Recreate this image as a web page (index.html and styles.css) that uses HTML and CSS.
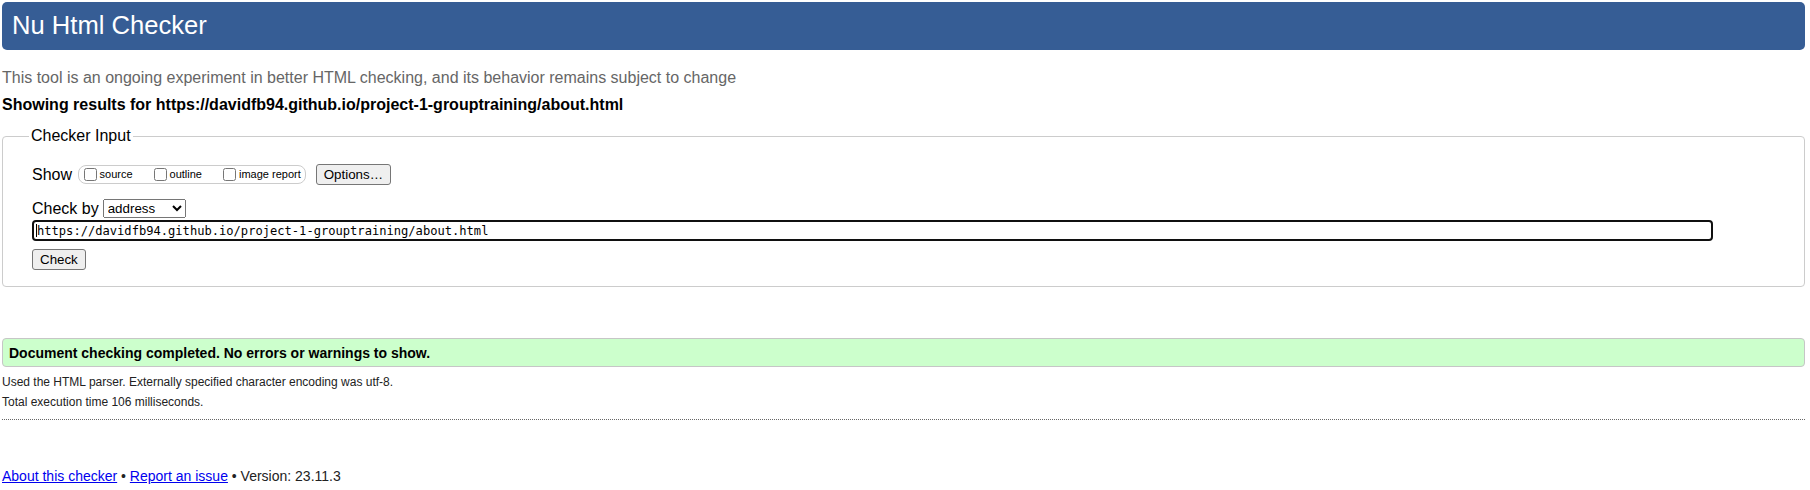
FILE: index.html
```html
<!DOCTYPE html>
<html lang="en">
<head>
<meta charset="utf-8">
<title>Nu Html Checker</title>
<link rel="stylesheet" href="styles.css">
</head>
<body>
<h1 class="title">Nu Html Checker</h1>
<p class="about">This tool is an ongoing experiment in better HTML checking, and its behavior remains subject to change</p>
<p class="showing">Showing results for https://davidfb94.github.io/project-1-grouptraining/about.html</p>
<form class="form">
  <fieldset class="input-set">
    <legend class="legend">Checker Input</legend>
    <div class="row row-show">
      <span class="lbl">Show</span>
      <span class="group">
        <label class="opt"><input type="checkbox" class="cb">source</label>
        <label class="opt"><input type="checkbox" class="cb">outline</label>
        <label class="opt last"><input type="checkbox" class="cb">image report</label>
      </span>
      <button type="button" class="btn btn-options">Options…</button>
    </div>
    <div class="row row-by">
      <span class="lbl">Check by</span>
      <select class="select">
        <option>address</option>
        <option>file upload</option>
        <option>text input</option>
      </select>
    </div>
    <div class="url-wrap">
      <input type="url" class="url" value="https://davidfb94.github.io/project-1-grouptraining/about.html">
      <span class="caret"></span>
    </div>
    <div class="row row-check">
      <button type="button" class="btn btn-check">Check</button>
    </div>
  </fieldset>
</form>
<p class="success">Document checking completed. No errors or warnings to show.</p>
<p class="meta first">Used the HTML parser. Externally specified character encoding was utf-8.</p>
<p class="meta">Total execution time 106 milliseconds.</p>
<hr class="sep">
<p class="footer"><a href="#" class="link">About this checker</a> • <a href="#" class="link">Report an issue</a> • Version: 23.11.3</p>
</body>
</html>
```

FILE: styles.css
```css
html, body {
  margin: 0;
  padding: 0;
  background: #fff;
}

body {
  font-family: "Liberation Sans", Arial, sans-serif;
  font-size: 16px;
  color: #000;
}

.title {
  margin: 2px 5px 0 2px;
  padding: 8px 10px 10px;
  border-radius: 5px;
  background: #365d95;
  color: #fff;
  font-size: 25.6px;
  font-weight: normal;
  line-height: 30px;
}

.about {
  margin: 18.5px 0 0 2px;
  color: #666;
  line-height: 18px;
}

.showing {
  margin: 9.5px 0 0 2px;
  font-weight: bold;
  line-height: 18px;
}

.form {
  margin: 0;
}

.input-set {
  margin: 13px 5px 0 2px;
  border: 1px solid #ccc;
  border-radius: 4px;
  padding: 19px 12px 16px 29px;
  min-width: 0;
}

.legend {
  margin-left: -3px;
  padding: 0 2px;
  font-size: 16px;
  line-height: 18px;
}

.row {
  display: flex;
  align-items: center;
  height: 21px;
}

.lbl {
  font-size: 16px;
  line-height: 18px;
}

.group {
  display: inline-flex;
  align-items: center;
  height: 17px;
  margin-left: 5.5px;
  padding: 0 4px 0 1px;
  border: 1px solid #ccc;
  border-radius: 8px;
}

.opt {
  display: inline-flex;
  align-items: center;
  font-size: 11px;
  line-height: 13px;
  margin-right: 17px;
}

.opt.last {
  margin-right: 0;
}

.cb {
  width: 13px;
  height: 13px;
  margin: 0 3px 0 4px;
}

.btn {
  height: 21px;
  padding: 0 7px;
  font-family: "Liberation Sans", Arial, sans-serif;
  font-size: 13.33px;
  color: #000;
  background: #efefef;
  border: 1px solid #767676;
  border-radius: 3px;
}

.btn-options {
  margin-left: 10px;
}

.row-by {
  margin-top: 13px;
}

.select {
  margin-left: 4px;
  height: 19px;
  font-family: "Liberation Sans", Arial, sans-serif;
  font-size: 13.33px;
}

.url-wrap {
  position: relative;
  margin-top: 1px;
  width: 95.5%;
}

.url {
  display: block;
  box-sizing: border-box;
  width: 100%;
  height: 21px;
  margin: 0;
  padding: 1px 3px;
  border: 2px solid #101010;
  border-radius: 4px;
  outline: none;
  font-family: "DejaVu Sans Mono", "Liberation Mono", monospace;
  font-size: 12.1px;
  color: #000;
  background: #fff;
}

.caret {
  position: absolute;
  left: 4px;
  top: 4px;
  width: 1px;
  height: 13px;
  background: #000;
}

.row-check {
  margin-top: 8px;
}

.success {
  margin: 51px 5px 0 2px;
  padding: 6px 7px 5px 6px;
  border: 1px solid #c6c6c6;
  border-radius: 4px;
  background: #ccffcc;
  font-size: 14px;
  font-weight: bold;
  line-height: 16px;
}

.meta {
  margin: 0 0 0 2px;
  font-size: 12px;
  line-height: 20px;
  color: #222;
}

.meta.first {
  margin-top: 5px;
}

.sep {
  margin: 7px 5px 0 2px;
  height: 0;
  border: 0;
  border-top: 1px dotted #666;
}

.footer {
  margin: 47px 0 0 2px;
  font-size: 14px;
  line-height: 18px;
  color: #222;
}

.link {
  color: #00e;
  text-decoration: underline;
}
```
